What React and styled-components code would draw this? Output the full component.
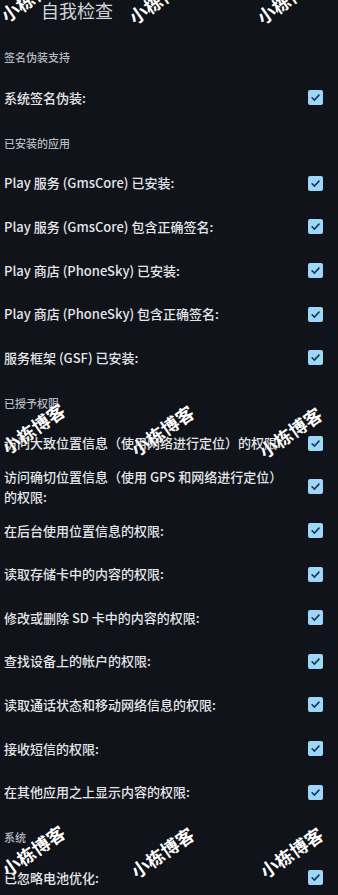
import styled, { createGlobalStyle } from 'styled-components';

const GlobalStyle = createGlobalStyle`
  html, body {
    margin: 0;
    padding: 0;
    background: #10141a;
  }
  body {
    font-family: "Noto Sans CJK SC", "Noto Sans", sans-serif;
    -webkit-font-smoothing: antialiased;
  }
`;

const Page = styled.div`
  position: relative;
  width: 338px;
  min-height: 895px;
  overflow: hidden;
  background: #10141a;
`;

const Header = styled.div`
  height: 34px;
  padding-left: 41px;
  box-sizing: border-box;
  font-size: 18px;
  line-height: 20px;
  color: #d3d6db;
`;

const SectionTitle = styled.div`
  padding: 15px 4px 11px;
  font-size: 11px;
  line-height: 16px;
  font-weight: 500;
  color: #b5bac2;
`;

const Row = styled.div`
  display: flex;
  align-items: center;
  min-height: 43.6px;
  padding: 0 15px 0 4px;
  gap: 14px;
`;

const Label = styled.div`
  flex: 1;
  font-size: 13px;
  line-height: 20px;
  font-weight: 500;
  color: #e3e5e9;
`;

const Box = styled.div`
  flex: none;
  width: 15px;
  height: 15px;
  border-radius: 2px;
  background: #9dd6f7;
  display: flex;
  align-items: center;
  justify-content: center;
`;

const Overlay = styled.div`
  position: absolute;
  inset: 0;
  pointer-events: none;
`;

const Mark = styled.div`
  position: absolute;
  transform: translate(-50%, -50%) rotate(-35deg);
  font-size: 18px;
  line-height: 20px;
  font-weight: 700;
  color: #ffffff;
  white-space: nowrap;
  text-shadow: 0 0 2px rgba(0, 0, 0, 0.6);
`;

function Check() {
  return (
    <Box>
      <svg width="11" height="11" viewBox="0 0 12 12">
        <path
          d="M2.3 6.3 L4.9 8.8 L9.8 3.4"
          fill="none"
          stroke="#173a58"
          strokeWidth="1.8"
          strokeLinecap="round"
          strokeLinejoin="round"
        />
      </svg>
    </Box>
  );
}

const sections = [
  {
    title: '签名伪装支持',
    items: ['系统签名伪装:'],
  },
  {
    title: '已安装的应用',
    items: [
      'Play 服务 (GmsCore) 已安装:',
      'Play 服务 (GmsCore) 包含正确签名:',
      'Play 商店 (PhoneSky) 已安装:',
      'Play 商店 (PhoneSky) 包含正确签名:',
      '服务框架 (GSF) 已安装:',
    ],
  },
  {
    title: '已授予权限',
    items: [
      '访问大致位置信息（使用网络进行定位）的权限:',
      '访问确切位置信息（使用 GPS 和网络进行定位）的权限:',
      '在后台使用位置信息的权限:',
      '读取存储卡中的内容的权限:',
      '修改或删除 SD 卡中的内容的权限:',
      '查找设备上的帐户的权限:',
      '读取通话状态和移动网络信息的权限:',
      '接收短信的权限:',
      '在其他应用之上显示内容的权限:',
    ],
  },
  {
    title: '系统',
    items: ['已忽略电池优化:'],
  },
];

const marks = [
  [32, -4], [160, -2], [288, -2],
  [33, 428], [162, 430], [290, 432],
  [33, 850], [162, 852], [291, 852],
];

export default function App() {
  return (
    <>
      <GlobalStyle />
      <Page>
        <Header>自我检查</Header>
        {sections.map((s) => (
          <div key={s.title}>
            <SectionTitle>{s.title}</SectionTitle>
            {s.items.map((item) => (
              <Row key={item}>
                <Label>{item}</Label>
                <Check />
              </Row>
            ))}
          </div>
        ))}
        <Overlay>
          {marks.map(([x, y]) => (
            <Mark key={`${x}-${y}`} style={{ left: x, top: y }}>
              小栋博客
            </Mark>
          ))}
        </Overlay>
      </Page>
    </>
  );
}
